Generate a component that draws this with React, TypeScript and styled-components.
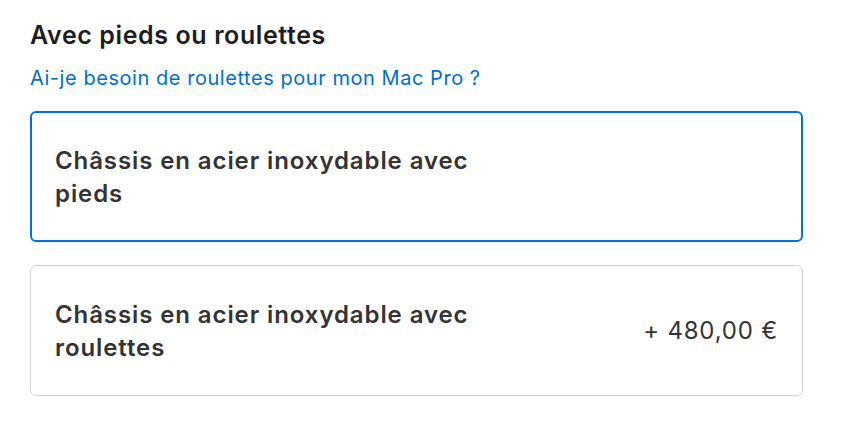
import React, { useState } from "react";
import styled, { createGlobalStyle } from "styled-components";

const GlobalStyle = createGlobalStyle`
  body {
    margin: 0;
    background: #ffffff;
    font-family: Inter, "Noto Sans", Arial, sans-serif;
    -webkit-font-smoothing: antialiased;
  }
`;

const Section = styled.section`
  width: 773px;
  padding: 20px 0 0 30px;
`;

const Title = styled.h2`
  margin: 0;
  font-size: 25px;
  line-height: 30px;
  font-weight: 600;
  color: #1d1d1f;
  letter-spacing: 0.6px;
`;

const HelpLink = styled.a`
  display: block;
  width: fit-content;
  margin-top: 17px;
  font-size: 20px;
  line-height: 22px;
  color: #0070c9;
  text-decoration: none;
  letter-spacing: 0.55px;
  cursor: pointer;
`;

const Options = styled.div`
  display: flex;
  flex-direction: column;
  gap: 23px;
  margin-top: 22px;
`;

const OptionCard = styled.button<{ selected?: boolean }>`
  display: flex;
  align-items: center;
  justify-content: space-between;
  width: 100%;
  height: 131px;
  padding: 0 ${(p) => (p.selected ? 23 : 24)}px;
  background: #ffffff;
  border: ${(p) => (p.selected ? "2px solid #0071e3" : "1px solid #d2d2d7")};
  border-radius: 6px;
  text-align: left;
  cursor: pointer;
  font-family: inherit;
  box-sizing: border-box;
`;

const OptionName = styled.span`
  max-width: 450px;
  font-size: 24px;
  line-height: 33px;
  font-weight: 600;
  color: #333336;
  letter-spacing: 0.9px;
`;

const OptionPrice = styled.span`
  font-size: 24px;
  line-height: 33px;
  font-weight: 400;
  color: #333336;
  letter-spacing: 0.8px;
`;

const options = [
  { id: "feet", name: "Châssis en acier inoxydable avec pieds", price: "" },
  {
    id: "wheels",
    name: "Châssis en acier inoxydable avec roulettes",
    price: "+ 480,00 €",
  },
];

const App = () => {
  const [selected, setSelected] = useState("feet");

  return (
    <>
      <GlobalStyle />
      <Section>
        <Title>Avec pieds ou roulettes</Title>
        <HelpLink>Ai-je besoin de roulettes pour mon Mac Pro ?</HelpLink>
        <Options>
          {options.map((option) => (
            <OptionCard
              key={option.id}
              selected={selected === option.id}
              onClick={() => setSelected(option.id)}
            >
              <OptionName>{option.name}</OptionName>
              {option.price && <OptionPrice>{option.price}</OptionPrice>}
            </OptionCard>
          ))}
        </Options>
      </Section>
    </>
  );
};

export default App;
